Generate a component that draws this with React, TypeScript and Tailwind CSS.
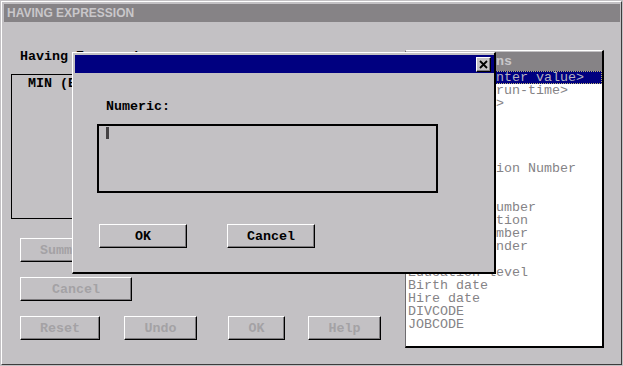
const rows = [
  "<Here you enter value>",
  "<Prompt at run-time>",
  "<Subqueries>",
  "Last name",
  "First name",
  "Initial",
  "City",
  "Identification Number",
  "State",
  "Salary",
  "Telephone Number",
  "Job Description",
  "Division Number",
  "Employee Gender",
  "Age",
  "Education level",
  "Birth date",
  "Hire date",
  "DIVCODE",
  "JOBCODE",
];

const raised =
  "border border-t-white border-l-white border-r-black border-b-black shadow-[inset_-1px_-1px_0_#7c7a7d] flex items-center justify-center";

function GrayButton({ label, w, className = "" }: { label: string; w: string; className?: string }) {
  return (
    <div className={`${raised} ${w} h-[24px] text-[#a4a2a5] font-bold ${className}`}>
      {label}
    </div>
  );
}

export default function App() {
  return (
    <div className="relative w-[623px] h-[366px] overflow-hidden bg-[#c3c1c4] p-px font-['Liberation_Mono',monospace] text-[13.33px] leading-[13px]">
      <div className="flex h-[364px] w-[621px] flex-col border border-t-white border-l-white border-r-[#3c3c3c] border-b-[#3c3c3c] pl-[2px] pr-px pt-[2px]">
        {/* title bar */}
        <div className="flex h-[18px] items-center bg-[#868386] pl-[3px] font-['Liberation_Sans',Arial,sans-serif] text-[12px] font-bold text-[#c9c7ca]">
          HAVING EXPRESSION
        </div>

        <div className="flex flex-1">
          {/* left column */}
          <div className="ml-[7px] flex w-[394px] flex-col">
            <div className="mt-[28px] pl-[9px] font-bold text-black">Having Expression:</div>
            <div className="mt-[11px] h-[145px] w-[385px] border border-black pl-[16px] pt-[2px] font-bold text-black">
              MIN (Education level) &gt; 12
            </div>
            <GrayButton label="Summarize" w="w-[112px]" className="ml-[9px] mt-[19px]" />
            <GrayButton label="Cancel" w="w-[112px]" className="ml-[9px] mt-[15px]" />
            <div className="ml-[9px] mt-[15px] flex">
              <GrayButton label="Reset" w="w-[80px]" />
              <GrayButton label="Undo" w="w-[73px]" className="ml-[24px]" />
              <GrayButton label="OK" w="w-[57px]" className="ml-[31px]" />
              <GrayButton label="Help" w="w-[73px]" className="ml-[23px]" />
            </div>
          </div>

          {/* columns list */}
          <div className="mt-[28px] flex h-[298px] w-[199px] flex-col border-t border-l border-r-2 border-b-2 border-t-white border-l-[#6e6c6f] border-r-black border-b-black pt-px">
            <div className="flex h-[19px] items-center bg-[#868386] pl-[2px] font-bold text-[#c9c7ca]">
              Table Columns
            </div>
            <div className="flex-1 bg-white">
              {rows.map((r, i) => (
                <div
                  key={i}
                  className={
                    i === 0
                      ? "h-[13px] whitespace-nowrap bg-[#000080] pl-[2px] text-[#b4b2c0] outline-1 outline-dotted -outline-offset-1 outline-[#b8b070]"
                      : "h-[13px] whitespace-nowrap pl-[2px] text-[#858386]"
                  }
                >
                  {r}
                </div>
              ))}
            </div>
          </div>
        </div>
      </div>

      {/* Numeric dialog */}
      <div className="absolute left-[72px] top-[52px] flex h-[222px] w-[424px] flex-col border-t border-l border-r-2 border-b-2 border-t-white border-l-white border-r-black border-b-black bg-[#c3c1c4] pl-[2px] pt-[2px]">
        <div className="flex h-[18px] items-center justify-end bg-[#000080] pr-[3px]">
          <div className={`${raised} h-[15px] w-[15px] bg-[#c3c1c4]`}>
            <svg width="9" height="9" viewBox="0 0 9 9">
              <path d="M1 1 L8 8 M8 1 L1 8" stroke="#000" strokeWidth="1.8" />
            </svg>
          </div>
        </div>
        <div className="ml-[31px] mt-[27px] font-bold text-black">Numeric:</div>
        <div className="ml-[22px] mt-[11px] h-[69px] w-[341px] border-2 border-black">
          <div className="ml-[7px] mt-px h-[12px] w-[3px] bg-[#444244]" />
        </div>
        <div className="ml-[24px] mt-[31px] flex">
          <div className={`${raised} h-[24px] w-[88px] font-bold text-black`}>OK</div>
          <div className={`${raised} ml-[40px] h-[24px] w-[88px] font-bold text-black`}>Cancel</div>
        </div>
      </div>
    </div>
  );
}
